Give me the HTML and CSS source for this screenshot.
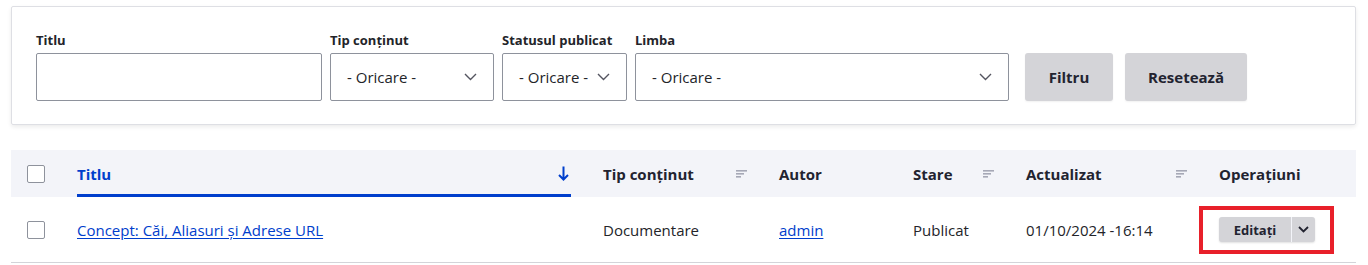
FILE: index.html
```html
<!DOCTYPE html>
<html lang="ro">
<head>
<meta charset="utf-8">
<title>Conținut</title>
<link rel="stylesheet" href="styles.css">
</head>
<body>
<div class="page">
  <form class="filters">
    <div class="field f-title">
      <label class="label">Titlu</label>
      <div class="input"></div>
    </div>
    <div class="field f-type">
      <label class="label">Tip conținut</label>
      <div class="select"><span>- Oricare -</span><svg class="chev" width="13" height="8" viewBox="0 0 13 8"><path d="M1 1l5.5 5.5L12 1" fill="none" stroke="#545560" stroke-width="1.4"/></svg></div>
    </div>
    <div class="field f-status">
      <label class="label">Statusul publicat</label>
      <div class="select"><span>- Oricare -</span><svg class="chev" width="13" height="8" viewBox="0 0 13 8"><path d="M1 1l5.5 5.5L12 1" fill="none" stroke="#545560" stroke-width="1.4"/></svg></div>
    </div>
    <div class="field f-lang">
      <label class="label">Limba</label>
      <div class="select"><span>- Oricare -</span><svg class="chev" width="13" height="8" viewBox="0 0 13 8"><path d="M1 1l5.5 5.5L12 1" fill="none" stroke="#545560" stroke-width="1.4"/></svg></div>
    </div>
    <div class="actions">
      <button type="button" class="btn">Filtru</button>
      <button type="button" class="btn">Resetează</button>
    </div>
  </form>

  <table class="table">
    <colgroup>
      <col class="c-check"><col class="c-title"><col class="c-type"><col class="c-author"><col class="c-status"><col class="c-updated"><col class="c-ops">
    </colgroup>
    <thead>
      <tr>
        <th class="th-check"><span class="checkbox"></span></th>
        <th><div class="th-in active"><span>Titlu</span><svg width="11" height="15" viewBox="0 0 11 15"><path d="M5.5 0.5v13M1 9l4.5 4.5L10 9" fill="none" stroke="#003ecc" stroke-width="2"/></svg></div></th>
        <th><div class="th-in"><span>Tip conținut</span><svg class="sort" width="11" height="8" viewBox="0 0 11 8"><rect x="0" y="0" width="11" height="1.6" fill="#a6a8b6"/><rect x="0" y="3" width="8" height="1.6" fill="#a6a8b6"/><rect x="0" y="6" width="5" height="1.6" fill="#a6a8b6"/></svg></div></th>
        <th><div class="th-in"><span>Autor</span></div></th>
        <th><div class="th-in"><span>Stare</span><svg class="sort" width="11" height="8" viewBox="0 0 11 8"><rect x="0" y="0" width="11" height="1.6" fill="#a6a8b6"/><rect x="0" y="3" width="8" height="1.6" fill="#a6a8b6"/><rect x="0" y="6" width="5" height="1.6" fill="#a6a8b6"/></svg></div></th>
        <th><div class="th-in"><span>Actualizat</span><svg class="sort" width="11" height="8" viewBox="0 0 11 8"><rect x="0" y="0" width="11" height="1.6" fill="#a6a8b6"/><rect x="0" y="3" width="8" height="1.6" fill="#a6a8b6"/><rect x="0" y="6" width="5" height="1.6" fill="#a6a8b6"/></svg></div></th>
        <th><div class="th-in"><span>Operațiuni</span></div></th>
      </tr>
    </thead>
    <tbody>
      <tr>
        <td class="td-check"><span class="checkbox"></span></td>
        <td><a href="#" class="link">Concept: Căi, Aliasuri și Adrese URL</a></td>
        <td>Documentare</td>
        <td><a href="#" class="link">admin</a></td>
        <td>Publicat</td>
        <td>01/10/2024 -16:14</td>
        <td>
          <div class="dropbutton">
            <span class="db-main">Editați</span><span class="db-toggle"><svg width="11" height="7" viewBox="0 0 11 7"><path d="M1 1l4.5 4.5L10 1" fill="none" stroke="#222330" stroke-width="1.8"/></svg></span>
          </div>
        </td>
      </tr>
    </tbody>
  </table>
</div>
</body>
</html>
```

FILE: styles.css
```css
* { box-sizing: border-box; }
html, body { margin: 0; padding: 0; background: #fff; }
body {
  font-family: "Open Sans", "Noto Sans", "Liberation Sans", sans-serif;
  color: #232429;
  font-size: 15px;
}
.page { padding: 6px 12px 0 11px; }

.filters {
  display: flex;
  align-items: flex-end;
  gap: 8px;
  border: 1px solid #dedfe4;
  border-radius: 2px;
  box-shadow: 0 2px 4px rgba(0, 0, 0, 0.08);
  padding: 24px 24px 23px 24px;
  margin: 0;
}
.field { display: flex; flex-direction: column; }
.label {
  font-size: 13px;
  font-weight: 700;
  line-height: 18px;
  margin-bottom: 4px;
  color: #232429;
  white-space: nowrap;
}
.input, .select {
  height: 48px;
  border: 1px solid #8e929c;
  border-radius: 2px;
  background: #fff;
}
.f-title { width: 286px; }
.f-type { width: 164px; }
.f-status { width: 125px; }
.f-lang { width: 374px; }
.select {
  display: flex;
  align-items: center;
  justify-content: space-between;
  padding: 0 16px 0 16px;
  font-size: 15px;
  color: #232429;
  white-space: nowrap;
}
.chev { flex: none; }
.actions { display: flex; gap: 12px; margin-left: 8px; }
.btn {
  height: 48px;
  padding: 0 24px;
  border: 0;
  border-radius: 3px;
  background: #d4d4d8;
  font-family: inherit;
  font-size: 15px;
  font-weight: 700;
  color: #222330;
  box-shadow: 0 1px 2px rgba(0,0,0,0.06);
}
.btn:first-child { width: 88px; padding: 0; }
.btn:last-child { width: 122px; padding: 0; }

.table {
  width: 1345px;
  margin-top: 25px;
  border-collapse: collapse;
  table-layout: fixed;
}
.c-check { width: 50px; }
.c-title { width: 526px; }
.c-type { width: 176px; }
.c-author { width: 134px; }
.c-status { width: 113px; }
.c-updated { width: 193px; }
.c-ops { width: 153px; }

thead tr { background: #f3f4f9; }
th {
  height: 47px;
  padding: 0 16px;
  text-align: left;
  font-weight: 700;
  font-size: 15px;
  color: #222330;
}
.th-check { padding: 0 0 0 16px; }
.th-in {
  height: 47px;
  display: flex;
  align-items: center;
  justify-content: space-between;
  border-bottom: 3px solid transparent;
  padding-top: 3px;
}
.th-in.active { color: #003ecc; border-bottom-color: #003ecc; }
.th-in.active svg { margin-right: 2px; }
.sort { margin-top: 1px; }

td {
  height: 65px;
  padding: 0 16px;
  padding-top: 1px;
  border-bottom: 1px solid #d3d4d9;
  font-size: 15px;
  color: #232429;
  white-space: nowrap;
}
.td-check { padding: 1px 0 0 16px; }
.checkbox {
  display: block;
  width: 18px;
  height: 18px;
  border: 1px solid #8e929c;
  border-radius: 2px;
  background: #fff;
}
.link { color: #003ecc; text-decoration: underline; text-underline-offset: 2px; }

.dropbutton {
  position: relative;
  display: inline-flex;
  width: 96px;
  height: 25px;
  border-radius: 3px;
  background: #d4d4d8;
  box-shadow: 0 1px 2px rgba(0,0,0,0.12);
  vertical-align: middle;
}
.dropbutton::after {
  content: "";
  position: absolute;
  top: -11px; left: -20px; right: -19px; bottom: -12px;
  border: 4px solid #e8202a;
}
.db-main {
  display: flex;
  align-items: center;
  justify-content: center;
  width: 73px;
  font-size: 13px;
  font-weight: 700;
  color: #222330;
  border-right: 1px solid #f3f4f9;
}
.db-toggle {
  display: flex;
  align-items: center;
  justify-content: center;
  flex: 1;
}
```
